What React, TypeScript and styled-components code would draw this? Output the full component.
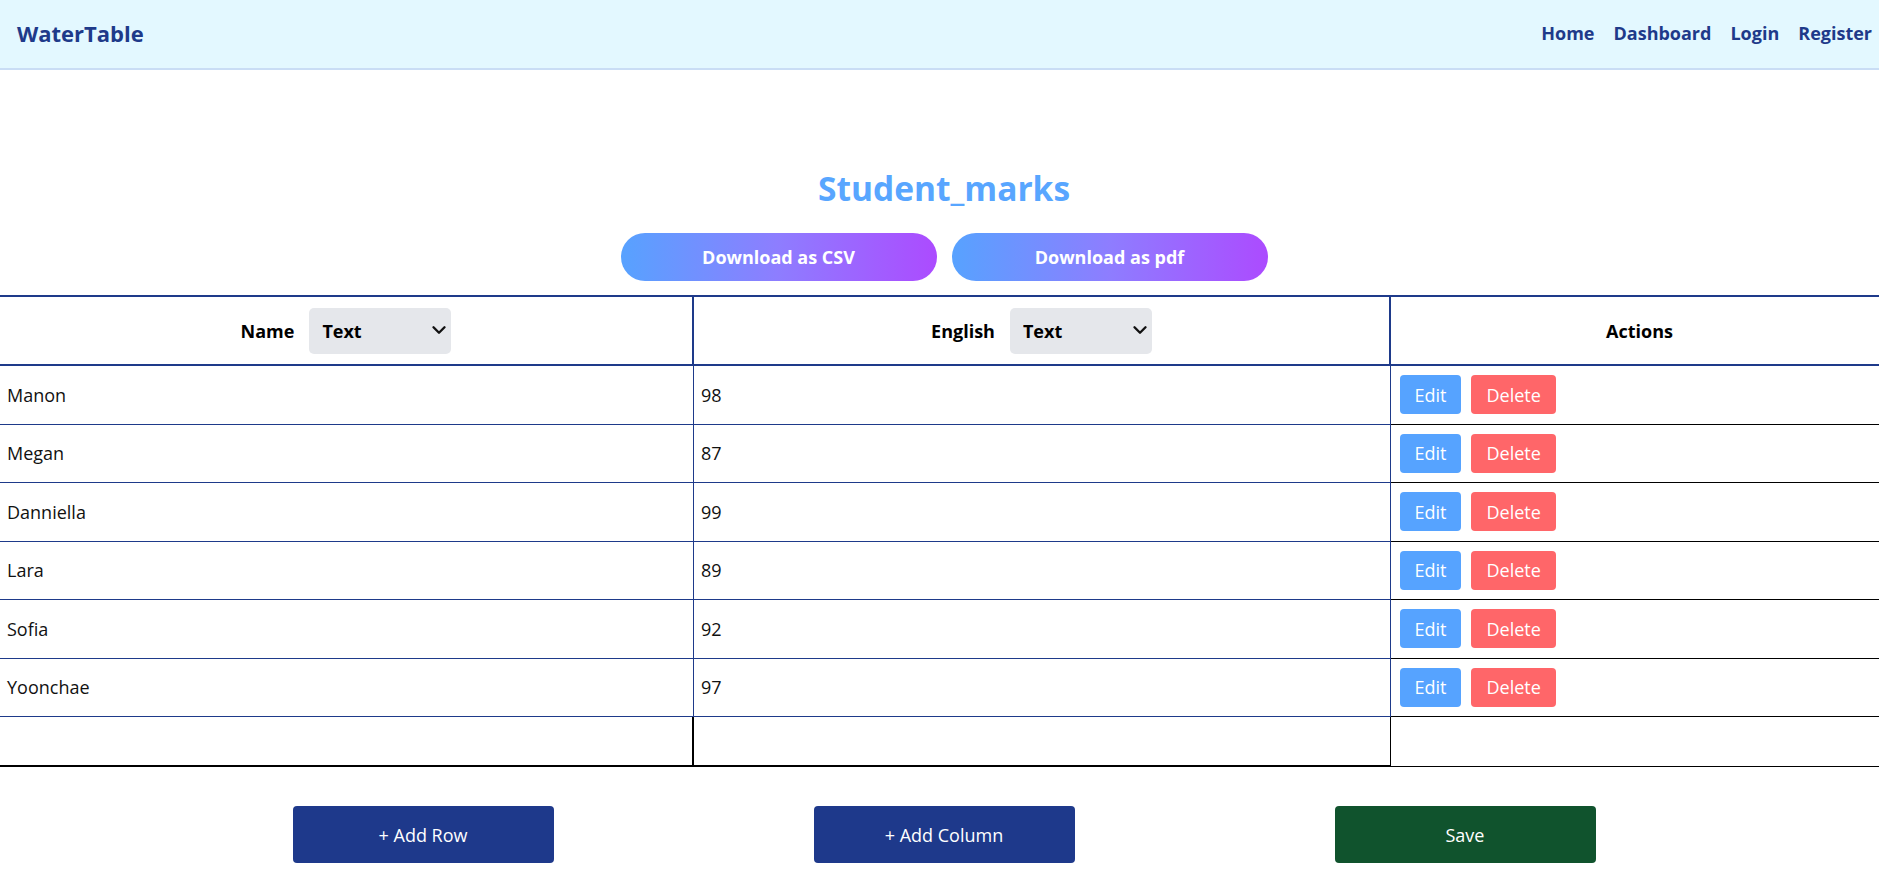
import React from "react";
import styled, { createGlobalStyle } from "styled-components";
import { ChevronDown } from "lucide-react";

const GlobalStyle = createGlobalStyle`
  html, body {
    margin: 0;
    padding: 0;
    overflow-x: hidden;
    background: #ffffff;
  }
  body {
    font-family: "Open Sans", "Noto Sans", Arial, sans-serif;
    color: #111111;
  }
  * { box-sizing: border-box; }
`;

const NAVY = "#1e3a8a";

const Page = styled.div`
  width: 1888px;
  min-height: 876px;
`;

const NavBar = styled.nav`
  height: 68px;
  display: flex;
  align-items: center;
  justify-content: space-between;
  padding: 0 16px 2px 17px;
  background: #e3f8ff;
  box-shadow: 0 2px 0 #c9ddf5;
`;

const Brand = styled.div`
  font-size: 22px;
  font-weight: 700;
  color: ${NAVY};
`;

const NavLinks = styled.div`
  display: flex;
  align-items: center;
  gap: 19px;
`;

const NavLink = styled.a`
  font-size: 18px;
  font-weight: 700;
  color: ${NAVY};
  text-decoration: none;
  cursor: pointer;
`;

const Main = styled.main`
  display: flex;
  flex-direction: column;
  align-items: center;
  padding-top: 98px;
`;

const Title = styled.h2`
  margin: 0;
  font-size: 33.5px;
  line-height: 44px;
  font-weight: 700;
  color: #58a6ff;
`;

const DownloadRow = styled.div`
  display: flex;
  gap: 15px;
  margin-top: 23px;
`;

const GradientButton = styled.button`
  width: 316px;
  height: 48px;
  border: none;
  border-radius: 24px;
  background: linear-gradient(90deg, #57a2ff 0%, #8e7dff 50%, #ac4bff 100%);
  color: #ffffff;
  font-family: inherit;
  font-size: 18px;
  font-weight: 700;
  cursor: pointer;
`;

const Grid = styled.div`
  width: 100%;
  margin-top: 14px;
  display: grid;
  grid-template-columns: 694px 697px 1fr;
`;

const HeadCell = styled.div<{ $divider?: boolean }>`
  height: 71px;
  border-top: 2px solid ${NAVY};
  border-bottom: 2px solid ${NAVY};
  border-right: ${(p) => (p.$divider ? `2px solid ${NAVY}` : "none")};
  display: flex;
  align-items: center;
  justify-content: center;
  gap: 15px;
  font-size: 18px;
  font-weight: 700;
  color: #000000;
`;

const SelectWrap = styled.div`
  position: relative;
  width: 142px;
  height: 46px;
`;

const TypeSelect = styled.select`
  appearance: none;
  -webkit-appearance: none;
  width: 100%;
  height: 100%;
  border: none;
  border-radius: 5px;
  background: #e5e7eb;
  padding: 0 0 0 13px;
  font-family: inherit;
  font-size: 18px;
  font-weight: 700;
  color: #000000;
  outline: none;
`;

const Chevron = styled.span`
  position: absolute;
  right: 1px;
  top: 11px;
  display: flex;
  pointer-events: none;
  color: #111111;
`;

const Cell = styled.div<{ $divider?: boolean; $black?: boolean }>`
  height: 58.5px;
  display: flex;
  align-items: center;
  padding: 0 7px;
  border-bottom: 1px solid ${(p) => (p.$black ? "#000000" : NAVY)};
  border-right: ${(p) => (p.$divider ? `1px solid ${NAVY}` : "none")};
  font-size: 18px;
  color: #111111;
`;

const ActionCell = styled(Cell)`
  gap: 10px;
  padding-left: 9px;
`;

const NewCell = styled.div<{ $right?: string; $bottom: string }>`
  height: 50px;
  border-right: ${(p) => p.$right ?? "none"};
  border-bottom: ${(p) => p.$bottom};
  display: flex;
`;

const NewInput = styled.input`
  flex: 1;
  min-width: 0;
  border: none;
  background: transparent;
  font-family: inherit;
  font-size: 18px;
  padding: 0 8px;
  outline: none;
`;

const SmallButton = styled.button<{ $tone: "edit" | "delete" }>`
  height: 39px;
  padding: 0 ${(p) => (p.$tone === "edit" ? "14.5px" : "15.5px")};
  border: none;
  border-radius: 4px;
  background: ${(p) => (p.$tone === "edit" ? "#56a3ff" : "#ff6669")};
  color: #ffffff;
  font-family: inherit;
  font-size: 18px;
  cursor: pointer;
`;

const Footer = styled.div`
  display: flex;
  justify-content: center;
  gap: 260px;
  margin-top: 39px;
`;

const FooterButton = styled.button<{ $green?: boolean }>`
  width: 261px;
  height: 57px;
  border: none;
  border-radius: 4px;
  background: ${(p) => (p.$green ? "#10532d" : "#1e398b")};
  color: #ffffff;
  font-family: inherit;
  font-size: 18px;
  cursor: pointer;
`;

const rows = [
  { name: "Manon", english: "98" },
  { name: "Megan", english: "87" },
  { name: "Danniella", english: "99" },
  { name: "Lara", english: "89" },
  { name: "Sofia", english: "92" },
  { name: "Yoonchae", english: "97" },
];

function HeaderSelect({ label }: { label: string }) {
  return (
    <>
      <span>{label}</span>
      <SelectWrap>
        <TypeSelect defaultValue="Text">
          <option>Text</option>
          <option>Number</option>
        </TypeSelect>
        <Chevron>
          <ChevronDown size={22} strokeWidth={2.6} />
        </Chevron>
      </SelectWrap>
    </>
  );
}

export default function App() {
  return (
    <Page>
      <GlobalStyle />
      <NavBar>
        <Brand>WaterTable</Brand>
        <NavLinks>
          <NavLink>Home</NavLink>
          <NavLink>Dashboard</NavLink>
          <NavLink>Login</NavLink>
          <NavLink>Register</NavLink>
        </NavLinks>
      </NavBar>
      <Main>
        <Title>Student_marks</Title>
        <DownloadRow>
          <GradientButton>Download as CSV</GradientButton>
          <GradientButton>Download as pdf</GradientButton>
        </DownloadRow>
        <Grid>
          <HeadCell $divider>
            <HeaderSelect label="Name" />
          </HeadCell>
          <HeadCell $divider>
            <HeaderSelect label="English" />
          </HeadCell>
          <HeadCell>Actions</HeadCell>
          {rows.map((r) => (
            <React.Fragment key={r.name}>
              <Cell $divider>{r.name}</Cell>
              <Cell $divider>{r.english}</Cell>
              <ActionCell $black>
                <SmallButton $tone="edit">Edit</SmallButton>
                <SmallButton $tone="delete">Delete</SmallButton>
              </ActionCell>
            </React.Fragment>
          ))}
          <NewCell $right="2px solid #000" $bottom="2px solid #000">
            <NewInput aria-label="new name" />
          </NewCell>
          <NewCell $right="1px solid #000" $bottom="2px solid #000">
            <NewInput aria-label="new english" />
          </NewCell>
          <NewCell $bottom="1px solid #000" />
        </Grid>
        <Footer>
          <FooterButton>+ Add Row</FooterButton>
          <FooterButton>+ Add Column</FooterButton>
          <FooterButton $green>Save</FooterButton>
        </Footer>
      </Main>
    </Page>
  );
}
